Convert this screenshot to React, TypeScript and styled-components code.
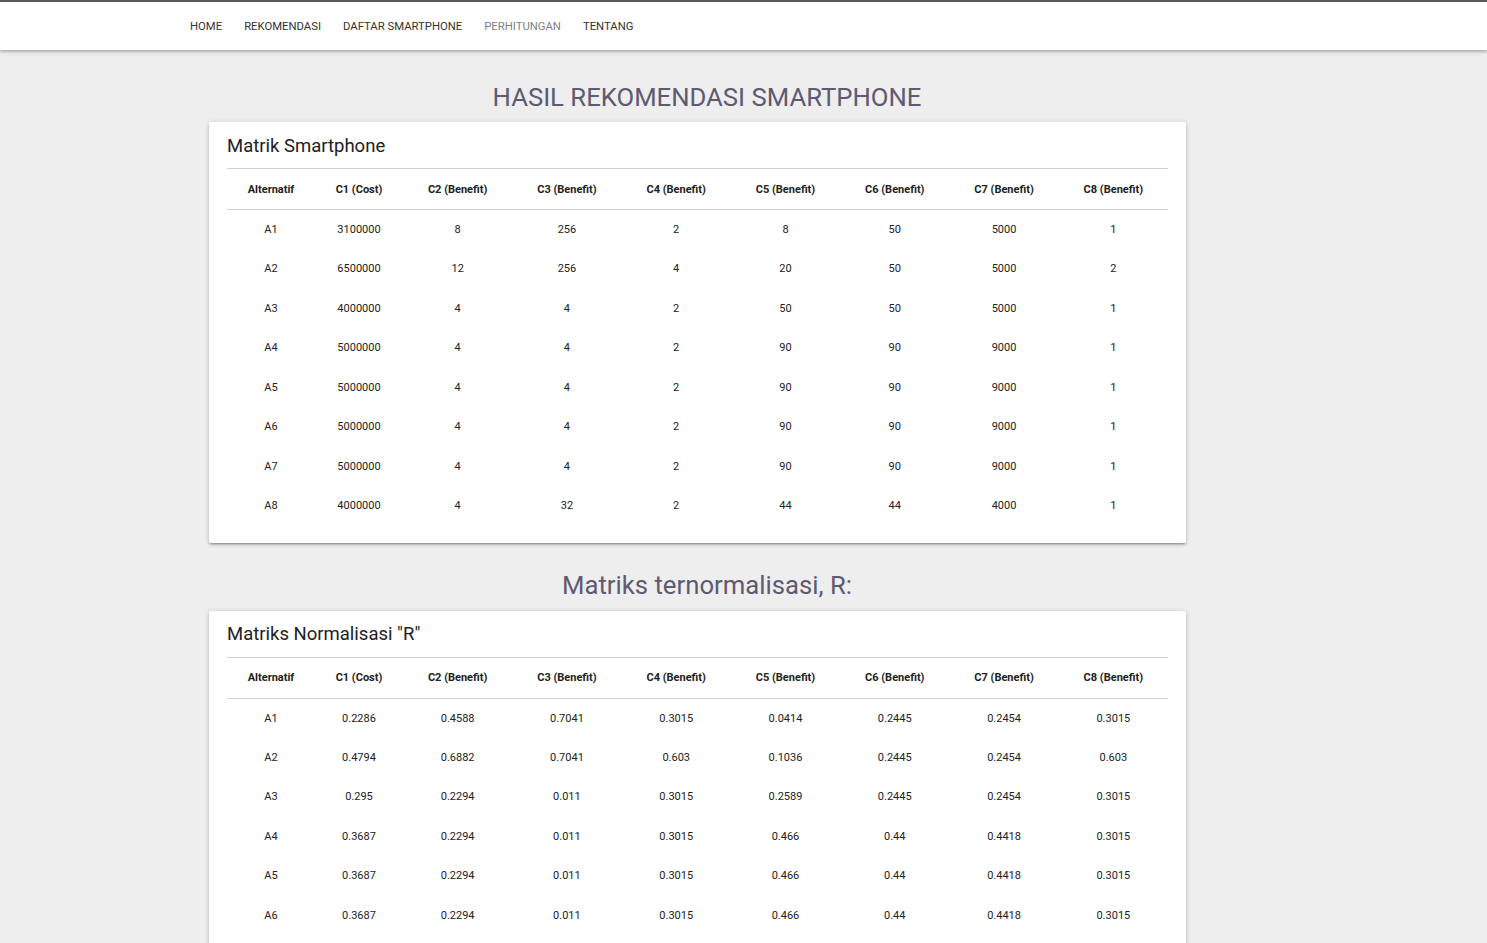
import React from 'react';
import styled, { createGlobalStyle } from 'styled-components';

const GlobalStyle = createGlobalStyle`
  html, body {
    margin: 0;
    padding: 0;
    background-color: #eeeeee;
    font-family: Roboto, "Noto Sans", sans-serif;
    color: rgba(0, 0, 0, 0.87);
  }
`;

const NavBar = styled.nav`
  height: 48px;
  background-color: #fff;
  border-top: 2px solid #5b5b5b;
  box-shadow: 0 2px 2px 0 rgba(0, 0, 0, 0.14), 0 1px 5px 0 rgba(0, 0, 0, 0.2);
  position: relative;
  z-index: 2;
`;

const NavList = styled.ul`
  display: flex;
  align-items: center;
  height: 100%;
  margin: 0;
  padding: 1px 0 0 179px;
  box-sizing: border-box;
  list-style: none;
`;

const NavLink = styled.a<{ $active?: boolean }>`
  display: block;
  padding: 0 11px;
  font-size: 11.3px;
  line-height: 46px;
  text-transform: uppercase;
  text-decoration: none;
  color: ${({ $active }) => ($active ? '#7d7f87' : '#333')};
  cursor: pointer;
`;

const Content = styled.main`
  width: 996px;
  margin-left: 209px;
  padding-bottom: 40px;
`;

const SectionTitle = styled.h2<{ $top: number; $bottom: number }>`
  margin: ${({ $top, $bottom }) => `${$top}px 0 ${$bottom}px`};
  font-size: 25.7px;
  line-height: 34px;
  font-weight: 400;
  text-align: center;
  color: #5d5a72;
`;

const Card = styled.section`
  width: 977px;
  box-sizing: border-box;
  padding: 11.5px 18px 17px;
  background-color: #fff;
  border-radius: 2px;
  box-shadow: 0 2px 2px 0 rgba(0, 0, 0, 0.14), 0 3px 1px -2px rgba(0, 0, 0, 0.12),
    0 1px 5px 0 rgba(0, 0, 0, 0.2);
`;

const CardTitle = styled.div`
  font-size: 18.5px;
  line-height: 24px;
  color: #212121;
  margin-bottom: 10.5px;
`;

const Table = styled.table`
  width: 100%;
  border-collapse: collapse;
  border-top: 1px solid #d0d0d0;
  font-size: 11px;
`;

const HeadCell = styled.th<{ $narrow?: boolean }>`
  height: 40px;
  padding: 0;
  width: ${({ $narrow }) => ($narrow ? '88px' : 'auto')};
  font-weight: 700;
  text-align: center;
  color: #212121;
  border-bottom: 1px solid #d0d0d0;
`;

const Row = styled.tr`
  height: 39.5px;
`;

const Cell = styled.td`
  padding: 0;
  text-align: center;
  color: #222;
`;

const headers = [
  'Alternatif',
  'C1 (Cost)',
  'C2 (Benefit)',
  'C3 (Benefit)',
  'C4 (Benefit)',
  'C5 (Benefit)',
  'C6 (Benefit)',
  'C7 (Benefit)',
  'C8 (Benefit)',
];

const matrix = [
  ['A1', '3100000', '8', '256', '2', '8', '50', '5000', '1'],
  ['A2', '6500000', '12', '256', '4', '20', '50', '5000', '2'],
  ['A3', '4000000', '4', '4', '2', '50', '50', '5000', '1'],
  ['A4', '5000000', '4', '4', '2', '90', '90', '9000', '1'],
  ['A5', '5000000', '4', '4', '2', '90', '90', '9000', '1'],
  ['A6', '5000000', '4', '4', '2', '90', '90', '9000', '1'],
  ['A7', '5000000', '4', '4', '2', '90', '90', '9000', '1'],
  ['A8', '4000000', '4', '32', '2', '44', '44', '4000', '1'],
];

const normalized = [
  ['A1', '0.2286', '0.4588', '0.7041', '0.3015', '0.0414', '0.2445', '0.2454', '0.3015'],
  ['A2', '0.4794', '0.6882', '0.7041', '0.603', '0.1036', '0.2445', '0.2454', '0.603'],
  ['A3', '0.295', '0.2294', '0.011', '0.3015', '0.2589', '0.2445', '0.2454', '0.3015'],
  ['A4', '0.3687', '0.2294', '0.011', '0.3015', '0.466', '0.44', '0.4418', '0.3015'],
  ['A5', '0.3687', '0.2294', '0.011', '0.3015', '0.466', '0.44', '0.4418', '0.3015'],
  ['A6', '0.3687', '0.2294', '0.011', '0.3015', '0.466', '0.44', '0.4418', '0.3015'],
  ['A7', '0.3687', '0.2294', '0.011', '0.3015', '0.466', '0.44', '0.4418', '0.3015'],
  ['A8', '0.295', '0.2294', '0.0881', '0.3015', '0.2278', '0.2152', '0.1963', '0.3015'],
];

const navItems = ['Home', 'Rekomendasi', 'Daftar Smartphone', 'Perhitungan', 'Tentang'];

const DataTable: React.FC<{ rows: string[][] }> = ({ rows }) => (
  <Table>
    <thead>
      <tr>
        {headers.map((h, i) => (
          <HeadCell key={h} $narrow={i < 2}>{h}</HeadCell>
        ))}
      </tr>
    </thead>
    <tbody>
      {rows.map(r => (
        <Row key={r[0]}>
          {r.map((v, i) => (
            <Cell key={i}>{v}</Cell>
          ))}
        </Row>
      ))}
    </tbody>
  </Table>
);

const App: React.FC = () => {
  return (
    <>
      <GlobalStyle />
      <NavBar>
        <NavList>
          {navItems.map(item => (
            <li key={item}>
              <NavLink $active={item === 'Perhitungan'}>{item}</NavLink>
            </li>
          ))}
        </NavList>
      </NavBar>
      <Content>
        <SectionTitle $top={30} $bottom={8}>HASIL REKOMENDASI SMARTPHONE</SectionTitle>
        <Card>
          <CardTitle>Matrik Smartphone</CardTitle>
          <DataTable rows={matrix} />
        </Card>
        <SectionTitle $top={25} $bottom={9}>Matriks ternormalisasi, R:</SectionTitle>
        <Card>
          <CardTitle>Matriks Normalisasi "R"</CardTitle>
          <DataTable rows={normalized} />
        </Card>
      </Content>
    </>
  );
};

export default App;
